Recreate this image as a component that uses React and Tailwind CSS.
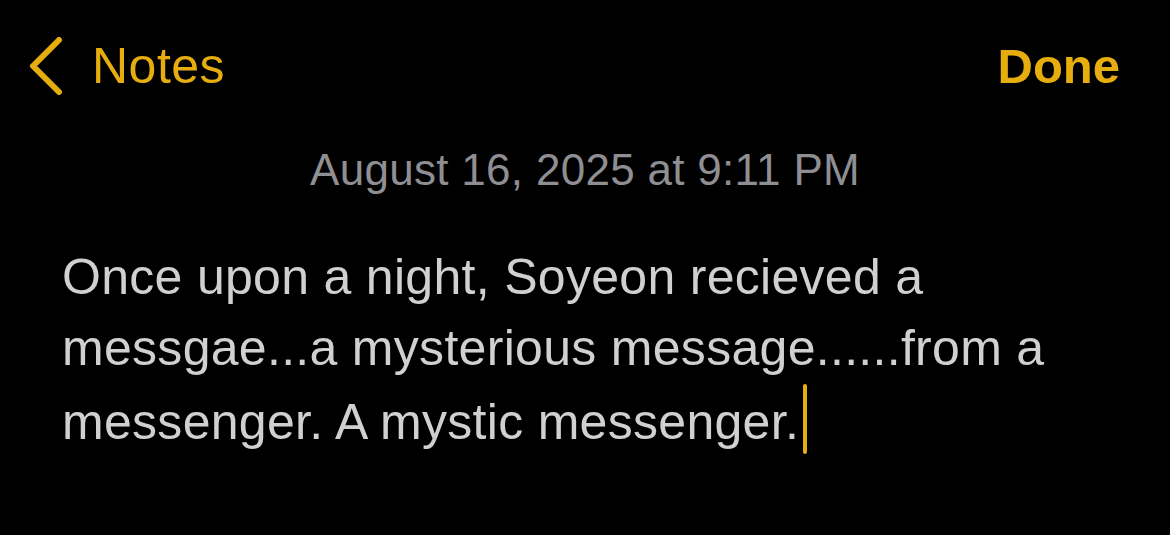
export default function App() {
  return (
    <div className="w-[1170px] h-[535px] bg-black overflow-hidden" style={{ fontFamily: '"Liberation Sans", Arial, sans-serif' }}>
      <header className="flex items-center justify-between pl-[28px] pr-[50px] pt-[38px] h-[94px]">
        <div className="flex items-center gap-[28px] text-[#e5ad0e]">
          <svg width="36" height="58" viewBox="0 0 36 58" fill="none">
            <path d="M31 3 L5 29 L31 55" stroke="#e5ad0e" strokeWidth="6" strokeLinecap="round" strokeLinejoin="round" />
          </svg>
          <span className="text-[50px] leading-none tracking-[0.5px]">Notes</span>
        </div>
        <span className="text-[49px] font-bold leading-none text-[#e5ad0e]">Done</span>
      </header>

      <div className="text-center text-[44px] leading-none tracking-[0.3px] text-[#8e8e93] mt-[54px]">
        August 16, 2025 at 9:11 PM
      </div>

      <p className="mt-[50px] px-[62px] text-[50px] leading-[71px] tracking-[0.3px] text-[#d0d0d0]">
        Once upon a night, Soyeon recieved a messgae...a mysterious message......from a messenger. A mystic messenger.
        <span className="inline-block w-[4px] h-[70px] bg-[#e5ad0e] rounded-full align-[-15px] ml-[4px]" />
      </p>
    </div>
  )
}
